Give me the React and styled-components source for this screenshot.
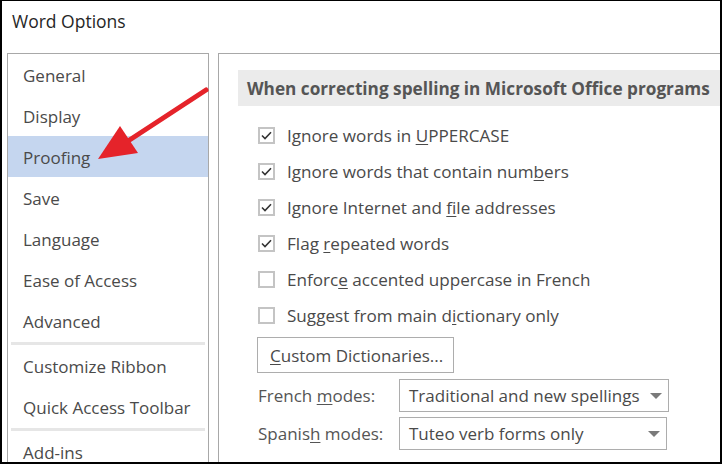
import React from "react"
import styled, { createGlobalStyle } from "styled-components"

const Global = createGlobalStyle`
  html, body {
    margin: 0;
    padding: 0;
    background: #fff;
  }
  body {
    font-family: "Open Sans", "Noto Sans", sans-serif;
  }
`

const Window = styled.div`
  position: relative;
  width: 722px;
  height: 464px;
  box-sizing: border-box;
  border: 2px solid #000;
  border-top-width: 1px;
  background: #fff;
  overflow: hidden;
  display: flex;
  flex-direction: column;
`

const TitleBar = styled.div`
  height: 52px;
  padding: 8px 0 0 10px;
  box-sizing: border-box;
  font-size: 17.5px;
  color: #262626;
`

const Body = styled.div`
  flex: 1;
  display: flex;
  gap: 9px;
  padding-left: 5px;
  min-height: 0;
`

const Sidebar = styled.nav`
  width: 202px;
  box-sizing: border-box;
  border: 1px solid #a8a8a8;
  border-bottom: none;
  display: flex;
  flex-direction: column;
`

const NavItem = styled.div`
  height: 41px;
  flex-shrink: 0;
  display: flex;
  align-items: center;
  padding: 2px 0 0 15px;
  box-sizing: border-box;
  font-size: 17px;
  color: #4a4a4a;
  background: ${p => (p.$active ? "#c5d6ef" : "transparent")};
`

const Separator = styled.div`
  height: 3px;
  flex-shrink: 0;
  margin: 1px 3px 0 3px;
  background: #e6e6e6;
`

const Main = styled.section`
  flex: 1;
  box-sizing: border-box;
  border-left: 1px solid #a8a8a8;
  border-top: 1px solid #a8a8a8;
  padding: 16px 0 0 19px;
  display: flex;
  flex-direction: column;
`

const SectionHeader = styled.div`
  height: 36px;
  display: flex;
  align-items: center;
  padding-left: 9px;
  background: #ebebeb;
  font-size: 17.2px;
  font-weight: 700;
  color: #555;
  white-space: nowrap;
`

const Options = styled.div`
  display: flex;
  flex-direction: column;
  padding: 11px 0 0 20px;
`

const CheckRow = styled.label`
  height: 36px;
  display: flex;
  align-items: center;
  gap: 12px;
  font-size: 17.1px;
  color: #4a4a4a;
`

const Box = styled.span`
  width: 17px;
  height: 17px;
  box-sizing: border-box;
  border: 2px solid #c4c4c4;
  display: flex;
  align-items: center;
  justify-content: center;
  background: #fff;
`

const Key = styled.span`
  text-decoration: underline;
  text-underline-offset: 2px;
  text-decoration-thickness: 1px;
`

const Button = styled.button`
  align-self: flex-start;
  margin: 4px 0 0 -1px;
  width: 197px;
  height: 36px;
  box-sizing: border-box;
  border: 1px solid #adadad;
  background: #fff;
  font-family: inherit;
  font-size: 17px;
  color: #4a4a4a;
  text-align: left;
  padding: 0 0 0 12px;
`

const ModeRow = styled.div`
  display: flex;
  align-items: center;
  margin-top: ${p => p.$top}px;
`

const ModeLabel = styled.span`
  width: 141px;
  font-size: 17px;
  color: #555;
`

const Select = styled.div`
  width: ${p => p.$w}px;
  height: 33px;
  box-sizing: border-box;
  border: 1px solid #adadad;
  display: flex;
  align-items: center;
  justify-content: space-between;
  padding: 0 6px 0 9px;
  font-size: 17px;
  color: #4a4a4a;
`

const Caret = styled.span`
  width: 0;
  height: 0;
  border-left: 6px solid transparent;
  border-right: 6px solid transparent;
  border-top: 6px solid #7a7a7a;
`

const ArrowLayer = styled.svg`
  position: absolute;
  left: 0;
  top: 0;
  pointer-events: none;
`

const Check = () => (
  <svg width="11" height="9" viewBox="0 0 11 9">
    <path d="M1 4.5 L4 7.5 L10 1.2" fill="none" stroke="#333" strokeWidth="1.6" />
  </svg>
)

const CheckOption = ({ checked, children }) => (
  <CheckRow>
    <Box>{checked && <Check />}</Box>
    <span>{children}</span>
  </CheckRow>
)

const navTop = ["General", "Display", "Proofing", "Save", "Language", "Ease of Access", "Advanced"]

export default function App() {
  return (
    <>
      <Global />
      <Window>
        <TitleBar>Word Options</TitleBar>
        <Body>
          <Sidebar>
            {navTop.map(n => (
              <NavItem key={n} $active={n === "Proofing"}>{n}</NavItem>
            ))}
            <Separator />
            <NavItem>Customize Ribbon</NavItem>
            <NavItem>Quick Access Toolbar</NavItem>
            <Separator />
            <NavItem>Add-ins</NavItem>
          </Sidebar>
          <Main>
            <SectionHeader>When correcting spelling in Microsoft Office programs</SectionHeader>
            <Options>
              <CheckOption checked>Ignore words in <Key>U</Key>PPERCASE</CheckOption>
              <CheckOption checked>Ignore words that contain num<Key>b</Key>ers</CheckOption>
              <CheckOption checked>Ignore Internet and <Key>f</Key>ile addresses</CheckOption>
              <CheckOption checked>Flag <Key>r</Key>epeated words</CheckOption>
              <CheckOption>Enforc<Key>e</Key> accented uppercase in French</CheckOption>
              <CheckOption>Suggest from main d<Key>i</Key>ctionary only</CheckOption>
              <Button><Key>C</Key>ustom Dictionaries...</Button>
              <ModeRow $top={6}>
                <ModeLabel>French <Key>m</Key>odes:</ModeLabel>
                <Select $w={270}>
                  <span>Traditional and new spellings</span>
                  <Caret />
                </Select>
              </ModeRow>
              <ModeRow $top={5}>
                <ModeLabel>Spanis<Key>h</Key> modes:</ModeLabel>
                <Select $w={268}>
                  <span>Tuteo verb forms only</span>
                  <Caret />
                </Select>
              </ModeRow>
            </Options>
          </Main>
        </Body>
        <ArrowLayer width="722" height="464" viewBox="0 0 722 464">
          <line x1="204" y1="89" x2="126" y2="140" stroke="#e5232a" strokeWidth="5" strokeLinecap="round" />
          <polygon points="96,158 118,125 136,152" fill="#e5232a" />
        </ArrowLayer>
      </Window>
    </>
  )
}
